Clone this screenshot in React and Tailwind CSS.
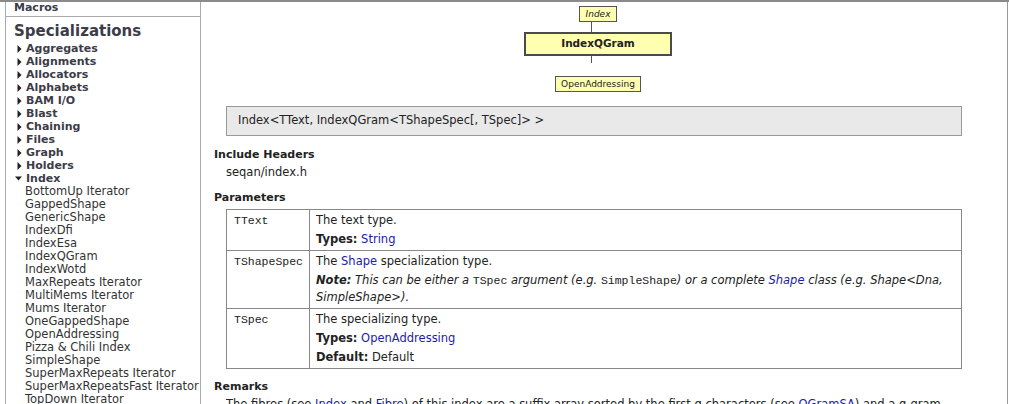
import React from "react";

const categories = [
  "Aggregates",
  "Alignments",
  "Allocators",
  "Alphabets",
  "BAM I/O",
  "Blast",
  "Chaining",
  "Files",
  "Graph",
  "Holders",
];

const indexItems = [
  "BottomUp Iterator",
  "GappedShape",
  "GenericShape",
  "IndexDfi",
  "IndexEsa",
  "IndexQGram",
  "IndexWotd",
  "MaxRepeats Iterator",
  "MultiMems Iterator",
  "Mums Iterator",
  "OneGappedShape",
  "OpenAddressing",
  "Pizza & Chili Index",
  "SimpleShape",
  "SuperMaxRepeats Iterator",
  "SuperMaxRepeatsFast Iterator",
  "TopDown Iterator",
];

const Tri = ({ open }) =>
  open ? (
    <svg width="7" height="5" viewBox="0 0 7 5" className="mr-[4px] ml-[-1px]">
      <path d="M0 0.5 L7 0.5 L3.5 4.5 Z" fill="#222" />
    </svg>
  ) : (
    <svg width="5" height="8" viewBox="0 0 5 8" className="mr-[4px] ml-[1px]">
      <path d="M0.5 0 L4.5 4 L0.5 8 Z" fill="#222" />
    </svg>
  );

const A = ({ children }) => <span className="text-[#1c1ca6]">{children}</span>;
const Mono = ({ children }) => (
  <span className="font-['Liberation_Mono',monospace] text-[11.5px] not-italic">{children}</span>
);

const Sidebar = () => (
  <div className="ml-[5px] w-[196px] shrink-0 border-x border-[#aaa] text-[#3c3c48]">
    <div className="h-[15px] border-b border-[#aaa] pl-[8px] text-[11px] font-bold leading-[12px]">
      Macros
    </div>
    <div className="mt-[3px] pl-[8px] text-[15px] font-bold leading-[22px]">Specializations</div>
    <div className="text-[11px] leading-[13px]">
      {categories.map((c) => (
        <div key={c} className="flex items-center pl-[10px] font-bold">
          <Tri />
          {c}
        </div>
      ))}
      <div className="flex items-center pl-[10px] font-bold">
        <Tri open />
        Index
      </div>
      {indexItems.map((c) => (
        <div key={c} className="whitespace-nowrap pl-[19px] text-[11.5px] text-[#333]">
          {c}
        </div>
      ))}
    </div>
  </div>
);

const Diagram = () => (
  <div className="flex flex-col items-center pt-[4px] text-[#222]">
    <div className="h-[16px] border border-[#555] bg-[#ffffb0] px-[6px] text-[9px] italic leading-[14px]">
      Index
    </div>
    <div className="ml-[-14px] h-[10px] w-px bg-[#555]"></div>
    <div className="flex h-[24px] w-[148px] items-center justify-center border-2 border-[#4a4a4a] bg-[#ffffb0] text-[10.5px] font-bold">
      IndexQGram
    </div>
    <div className="ml-[-14px] h-[7px] w-px bg-[#555]"></div>
    <div className="mt-[13px] h-[16px] border border-[#555] bg-[#ffffb0] px-[5px] text-[9px] leading-[14px]">
      OpenAddressing
    </div>
  </div>
);

const Row = ({ name, children, last }) => (
  <div className={"flex " + (last ? "" : "border-b border-[#888]")}>
    <div className="w-[83px] shrink-0 border-r border-[#888] pl-[7px] pt-[2px] leading-[17px]">
      <Mono>{name}</Mono>
    </div>
    <div className="flex flex-1 flex-col gap-[2px] py-[2px] pl-[6px] leading-[17px]">{children}</div>
  </div>
);

export default function App() {
  return (
    <div className="h-[404px] overflow-hidden bg-white font-['DejaVu_Sans',Verdana,sans-serif] text-[11.5px] text-[#222]">
      <div className="flex h-full border-t-2 border-[#8a8a8a]">
        <Sidebar />
        <div className="mr-[1px] flex-1 border-r border-[#999] pl-[13px] pr-[25px]">
          <Diagram />
          <div className="ml-3 mr-5 mt-[14px] flex h-[30px] items-center border border-[#999] bg-[#e9e9e9] pl-[11px]">
            Index&lt;TText, IndexQGram&lt;TShapeSpec[, TSpec]&gt; &gt;
          </div>
          <div className="mt-[11px] text-[11px] font-bold leading-[16px]">Include Headers</div>
          <div className="mt-[1px] pl-3 leading-[16px]">seqan/index.h</div>
          <div className="mt-[10px] text-[11px] font-bold leading-[16px]">Parameters</div>
          <div className="ml-3 mr-5 mt-[3px] border border-[#888]">
            <Row name="TText">
              <div>The text type.</div>
              <div>
                <b>Types:</b> <A>String</A>
              </div>
            </Row>
            <Row name="TShapeSpec">
              <div>
                The <A>Shape</A> specialization type.
              </div>
              <div className="italic">
                <b>Note:</b> This can be either a <Mono>TSpec</Mono> argument (e.g. <Mono>SimpleShape</Mono>) or a
                complete <A>Shape</A> class (e.g. Shape&lt;Dna,
                <br />
                SimpleShape&gt;).
              </div>
            </Row>
            <Row name="TSpec" last>
              <div>The specializing type.</div>
              <div>
                <b>Types:</b> <A>OpenAddressing</A>
              </div>
              <div>
                <b>Default:</b> Default
              </div>
            </Row>
          </div>
          <div className="mt-[11px] text-[11px] font-bold leading-[14px]">Remarks</div>
          <div className="mt-[2px] whitespace-nowrap pl-3 leading-[17px]">
            The fibres (see <A>Index</A> and <A>Fibre</A>) of this index are a suffix array sorted by the first q
            characters (see <A>QGramSA</A>) and a q-gram
          </div>
        </div>
      </div>
    </div>
  );
}
